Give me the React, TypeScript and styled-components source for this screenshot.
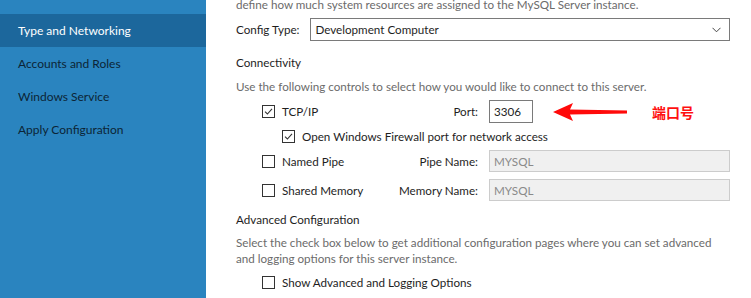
import React from 'react'
import styled, { createGlobalStyle } from 'styled-components'

const GlobalStyle = createGlobalStyle`
  html, body {
    margin: 0;
    padding: 0;
    background: #ffffff;
  }
  body {
    font-family: Lato, 'Noto Sans', sans-serif;
    font-size: 11.65px;
    color: #1e1e1e;
  }
`

const Window = styled.div`
  display: flex;
  width: 751px;
  height: 298px;
  overflow: hidden;
`

const Sidebar = styled.nav`
  display: flex;
  flex-direction: column;
  flex-shrink: 0;
  width: 206px;
  padding-top: 14px;
  background-color: #2a84bf;
`

const NavItem = styled.div<{ $active?: boolean }>`
  display: flex;
  align-items: center;
  height: 33px;
  padding-left: 18px;
  font-size: 12px;
  color: ${p => (p.$active ? '#ffffff' : '#0c2436')};
  background-color: ${p => (p.$active ? '#1c679c' : 'transparent')};
`

const Content = styled.main`
  display: flex;
  flex-direction: column;
  flex: 1;
  padding-left: 30px;
  padding-right: 21px;
`

const Description = styled.p<{ $top?: number }>`
  margin: ${p => p.$top ?? 0}px 0 0;
  line-height: 16px;
  color: #6b6b6b;
`

const Heading = styled.div<{ $top: number }>`
  margin-top: ${p => p.$top}px;
  line-height: 16px;
  color: #1e1e1e;
`

const ConfigRow = styled.div`
  display: flex;
  align-items: center;
  gap: 11px;
  margin-top: 5px;
`

const Select = styled.div`
  display: flex;
  align-items: center;
  justify-content: space-between;
  flex: 1;
  height: 21px;
  padding: 0 8px 0 4px;
  border: 1px solid #7a7a7a;
  color: #1e1e1e;
`

const ConnGrid = styled.div`
  display: grid;
  grid-template-columns: 109px 96px 1fr;
  grid-template-rows: 23px 13px 22px 22px;
  column-gap: 11px;
  row-gap: 7px;
  align-items: center;
  margin-top: 5px;
  padding-left: 26px;
`

const Option = styled.label<{ $indent?: number; $span?: boolean }>`
  display: flex;
  align-items: center;
  gap: 7px;
  padding-left: ${p => p.$indent ?? 0}px;
  grid-column: ${p => (p.$span ? '1 / -1' : 'auto')};
  color: #1e1e1e;
  white-space: nowrap;
`

const Box = styled.span`
  display: inline-flex;
  align-items: center;
  justify-content: center;
  width: 11px;
  height: 11px;
  border: 1px solid #333333;
  background: #ffffff;
  flex-shrink: 0;
`

const FieldLabel = styled.span`
  text-align: right;
  color: #1e1e1e;
  white-space: nowrap;
`

const FieldCell = styled.div`
  display: flex;
  align-items: center;
  height: 100%;
`

const TextBox = styled.div<{ $disabled?: boolean; $width?: number }>`
  display: flex;
  align-items: center;
  box-sizing: border-box;
  width: ${p => (p.$width ? `${p.$width}px` : '100%')};
  height: 100%;
  padding-left: 4px;
  border: 1px solid ${p => (p.$disabled ? '#cccccc' : '#7a7a7a')};
  background: ${p => (p.$disabled ? '#f0f0f0' : '#ffffff')};
  color: ${p => (p.$disabled ? '#8a8a8a' : '#1e1e1e')};
`

const Arrow = styled.svg`
  margin-left: 20px;
  flex-shrink: 0;
`

const Annotation = styled.span`
  margin-left: 25px;
  font-family: 'Noto Sans CJK SC', sans-serif;
  font-size: 14px;
  font-weight: 700;
  color: #ff1010;
`

const AdvancedOption = styled(Option)`
  height: 22px;
  margin-top: 4px;
  padding-left: 26px;
`

function CheckBox({ checked }: { checked?: boolean }) {
  return (
    <Box>
      {checked && (
        <svg width="9" height="9" viewBox="0 0 9 9">
          <path d="M1 4.6 L3.4 7 L8 1.8" fill="none" stroke="#333" strokeWidth="1.1" />
        </svg>
      )}
    </Box>
  )
}

function Chevron() {
  return (
    <svg width="9" height="6" viewBox="0 0 9 6">
      <path d="M0.5 0.8 L4.5 4.8 L8.5 0.8" fill="none" stroke="#444" strokeWidth="1" />
    </svg>
  )
}

function RedArrow() {
  return (
    <Arrow width="74" height="20" viewBox="0 0 74 20">
      <path d="M0 10 L20 1 L17 7.5 L74 8.6 L74 11.4 L17 12.5 L20 19 Z" fill="#ff0a0a" />
    </Arrow>
  )
}

export default function App() {
  return (
    <>
      <GlobalStyle />
      <Window>
        <Sidebar>
          <NavItem $active>Type and Networking</NavItem>
          <NavItem>Accounts and Roles</NavItem>
          <NavItem>Windows Service</NavItem>
          <NavItem>Apply Configuration</NavItem>
        </Sidebar>

        <Content>
          <Description $top={-3}>define how much system resources are assigned to the MySQL Server instance.</Description>

          <ConfigRow>
            <span>Config Type:</span>
            <Select>
              <span>Development Computer</span>
              <Chevron />
            </Select>
          </ConfigRow>

          <Heading $top={14}>Connectivity</Heading>
          <Description $top={8}>Use the following controls to select how you would like to connect to this server.</Description>

          <ConnGrid>
            <Option><CheckBox checked />TCP/IP</Option>
            <FieldLabel>Port:</FieldLabel>
            <FieldCell>
              <TextBox $width={44}>3306</TextBox>
              <RedArrow />
              <Annotation>端口号</Annotation>
            </FieldCell>

            <Option $span $indent={20}><CheckBox checked />Open Windows Firewall port for network access</Option>

            <Option><CheckBox />Named Pipe</Option>
            <FieldLabel>Pipe Name:</FieldLabel>
            <FieldCell><TextBox $disabled>MYSQL</TextBox></FieldCell>

            <Option><CheckBox />Shared Memory</Option>
            <FieldLabel>Memory Name:</FieldLabel>
            <FieldCell><TextBox $disabled>MYSQL</TextBox></FieldCell>
          </ConnGrid>

          <Heading $top={11}>Advanced Configuration</Heading>
          <Description $top={7}>
            Select the check box below to get additional configuration pages where you can set advanced
            and logging options for this server instance.
          </Description>

          <AdvancedOption><CheckBox />Show Advanced and Logging Options</AdvancedOption>
        </Content>
      </Window>
    </>
  )
}
